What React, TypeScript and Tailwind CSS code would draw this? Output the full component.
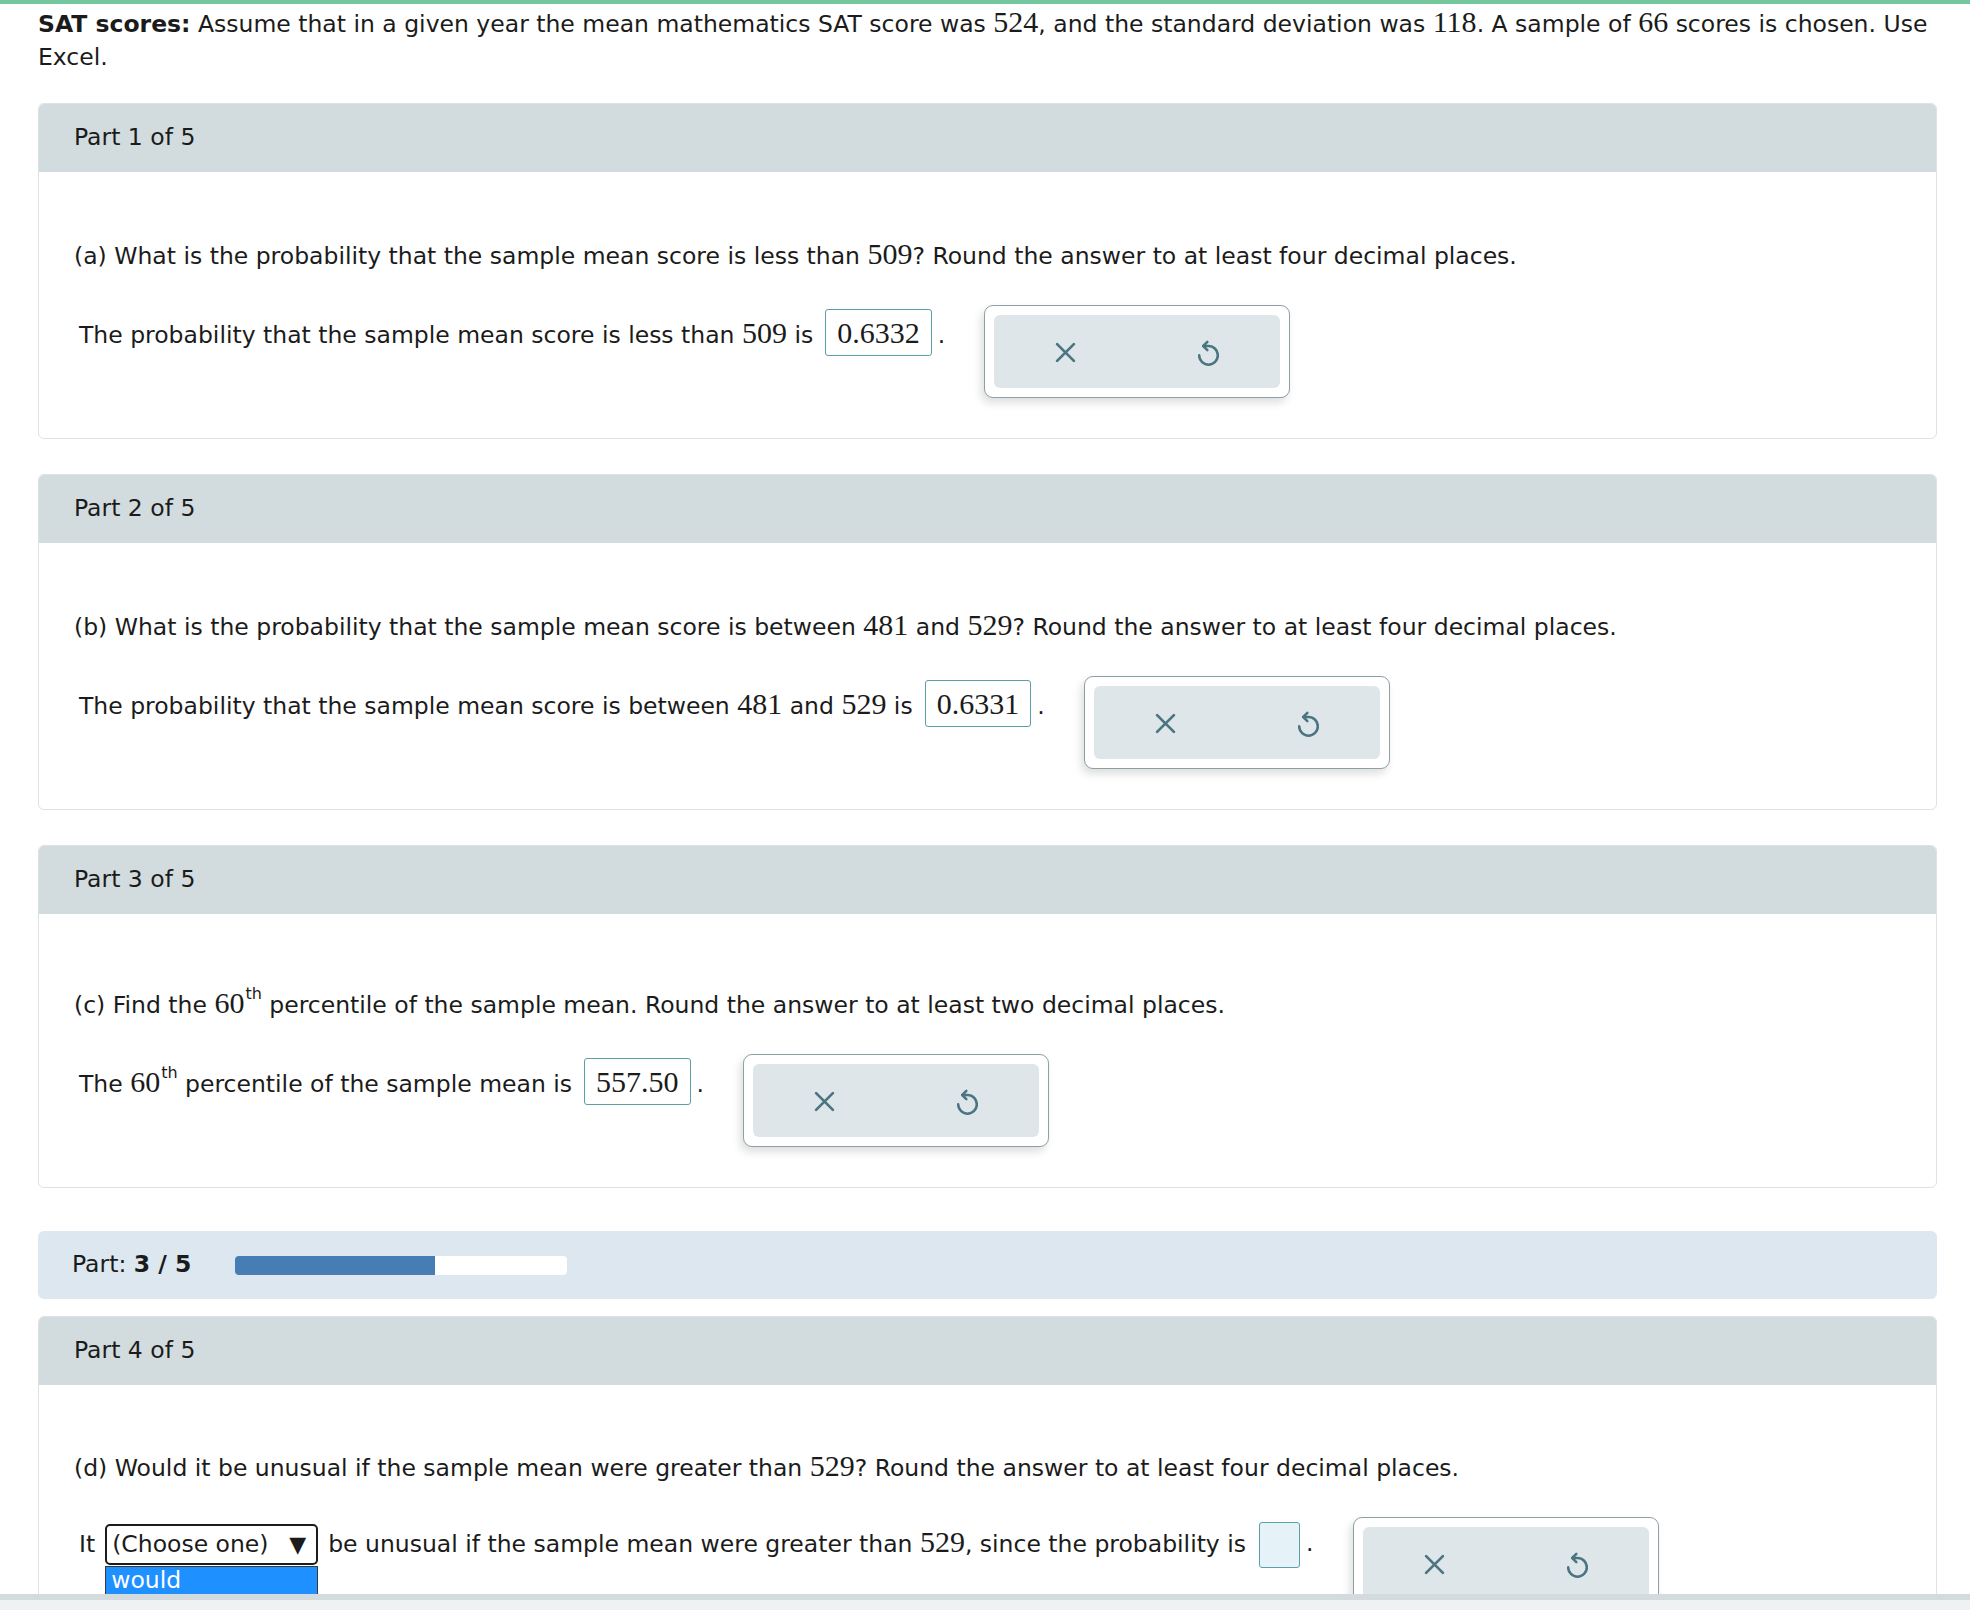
import React from "react";

function Num({ children }: { children: React.ReactNode }) {
  return <span className="font-['Liberation_Serif',serif] text-[30px]">{children}</span>;
}

function Sup({ children }: { children: React.ReactNode }) {
  return (
    <span className="relative -top-[14px] ml-[1px] inline-block text-[16px] leading-none">{children}</span>
  );
}

function AnswerBox({ value }: { value: string }) {
  return (
    <span className="ml-[12px] inline-flex h-[47px] items-center rounded-[3px] border-[1.5px] border-[#5b9fa9] bg-white px-[11px] align-baseline font-['Liberation_Serif',serif] text-[30px] leading-none">
      {value}
    </span>
  );
}

function XIcon() {
  return (
    <svg width="21" height="21" viewBox="0 0 20 20" fill="none" stroke="#4a7581" strokeWidth="2.6" strokeLinecap="round">
      <line x1="2" y1="2" x2="18" y2="18" />
      <line x1="18" y1="2" x2="2" y2="18" />
    </svg>
  );
}

function ResetIcon() {
  return (
    <svg width="21" height="26" viewBox="3 3 18 22" fill="none" stroke="#4a7581" strokeWidth="2.2" strokeLinecap="round" strokeLinejoin="round">
      <path d="M7.5 8 H12 A8 8 0 1 1 4 16" />
      <path d="M11 4.5 L7.5 8 L11 11.5" />
    </svg>
  );
}

function ActionBox() {
  return (
    <div className="ml-[39px] h-[93px] w-[306px] shrink-0 rounded-[9px] border border-[#8e9fa6] bg-white p-[9px] shadow-[-3px_5px_8px_rgba(0,0,0,0.13)]">
      <div className="flex h-full rounded-[6px] bg-[#dfe6e9]">
        <div className="flex flex-1 items-center justify-center pt-[2px]">
          <XIcon />
        </div>
        <div className="flex flex-1 items-center justify-center pt-[2px]">
          <ResetIcon />
        </div>
      </div>
    </div>
  );
}

function Card({
  title,
  question,
  answer,
  padTop,
  className,
}: {
  title: string;
  question: React.ReactNode;
  answer: React.ReactNode;
  padTop: string;
  className: string;
}) {
  return (
    <div className={`${className} overflow-hidden rounded-[6px] border border-[#dde2e4] bg-white`}>
      <div className="flex h-[68px] items-center bg-[#d2dbde] px-[35px]">{title}</div>
      <div className={`${padTop} px-[35px] pb-[40px]`}>
        <div className="leading-[33px] whitespace-nowrap">{question}</div>
        <div className="mt-[32px] flex items-start pl-[5px]">
          <div className="mt-[4px] flex h-[47px] items-center whitespace-nowrap">
            <span className="leading-[33px]">{answer}</span>
          </div>
          <ActionBox />
        </div>
      </div>
    </div>
  );
}

export default function App() {
  return (
    <div className="flex h-[1610px] w-full flex-col overflow-hidden bg-white font-['DejaVu_Sans',sans-serif] text-[23.5px] text-[#1b1b1b]">
      <div className="h-[4px] shrink-0 bg-[#74c69d]" />
      <div className="min-h-0 flex-1 overflow-hidden pl-[38px] pr-[33px] pt-[1px]">
        <div className="leading-[33px]">
          <span className="whitespace-nowrap">
            <b>SAT scores:</b> Assume that in a given year the mean mathematics SAT score was <Num>524</Num>, and the
            standard deviation was <Num>118</Num>. A sample of <Num>66</Num> scores is chosen. Use
          </span>
          <br />
          Excel.
        </div>

        <Card
          className="mt-[29px]"
          title="Part 1 of 5"
          padTop="pt-[65px]"
          question={
            <>
              (a) What is the probability that the sample mean score is less than <Num>509</Num>? Round the answer to at
              least four decimal places.
            </>
          }
          answer={
            <>
              The probability that the sample mean score is less than <Num>509</Num> is
              <AnswerBox value="0.6332" />
              <span className="ml-[6px]">.</span>
            </>
          }
        />

        <Card
          className="mt-[35px]"
          title="Part 2 of 5"
          padTop="pt-[65px]"
          question={
            <>
              (b) What is the probability that the sample mean score is between <Num>481</Num> and <Num>529</Num>? Round
              the answer to at least four decimal places.
            </>
          }
          answer={
            <>
              The probability that the sample mean score is between <Num>481</Num> and <Num>529</Num> is
              <AnswerBox value="0.6331" />
              <span className="ml-[6px]">.</span>
            </>
          }
        />

        <Card
          className="mt-[35px]"
          title="Part 3 of 5"
          padTop="pt-[72px]"
          question={
            <>
              (c) Find the <Num>60</Num>
              <Sup>th</Sup> percentile of the sample mean. Round the answer to at least two decimal places.
            </>
          }
          answer={
            <>
              The <Num>60</Num>
              <Sup>th</Sup> percentile of the sample mean is
              <AnswerBox value="557.50" />
              <span className="ml-[6px]">.</span>
            </>
          }
        />

        <div className="mt-[43px] flex h-[68px] items-center rounded-[6px] bg-[#dce7f0] px-[34px]">
          <span>
            Part: <b>3 / 5</b>
          </span>
          <div className="ml-[44px] h-[19px] w-[332px] overflow-hidden rounded-[4px] bg-white">
            <div className="h-full w-[60%] bg-[#477db5]" />
          </div>
        </div>

        <div className="mt-[17px] overflow-hidden rounded-[6px] border border-[#dde2e4] bg-white">
          <div className="flex h-[68px] items-center bg-[#d2dbde] px-[35px]">Part 4 of 5</div>
          <div className="px-[35px] pb-[40px] pt-[64px]">
            <div className="leading-[33px] whitespace-nowrap">
              (d) Would it be unusual if the sample mean were greater than <Num>529</Num>? Round the answer to at least
              four decimal places.
            </div>
            <div className="mt-[32px] flex items-start pl-[5px]">
              <div className="mt-[4px] flex h-[47px] items-center whitespace-nowrap">
                <span className="leading-[33px]">
                  It
                  <span className="relative ml-[10px] mr-[10px] inline-flex align-middle">
                    <span className="inline-flex h-[41px] w-[213px] items-center justify-between rounded-[5px] border-[2.5px] border-[#1c1c1c] bg-white pl-[5px] pr-[10px]">
                      <span>(Choose one)</span>
                      <span className="text-[22px]">▼</span>
                    </span>
                    <span className="absolute left-0 top-full mt-[1px] flex w-[213px] flex-col border border-[#3a3a3a] bg-white">
                      <span className="bg-[#1e90ff] pl-[5px] leading-[27px] text-white">would</span>
                      <span className="pl-[5px] leading-[27px]">would not</span>
                    </span>
                  </span>
                  be unusual if the sample mean were greater than <Num>529</Num>, since the probability is
                  <span className="ml-[13px] inline-block h-[46px] w-[41px] rounded-[3px] border-[1.5px] border-[#5b9fa9] bg-[#e5f3f8] align-middle" />
                  <span className="ml-[6px]">.</span>
                </span>
              </div>
              <ActionBox />
            </div>
          </div>
        </div>
      </div>
      <div className="flex h-[16px] shrink-0 flex-col">
        <div className="h-[6px] bg-[#d3dbde]" />
        <div className="flex-1 bg-[#eef2f3]" />
      </div>
    </div>
  );
}
